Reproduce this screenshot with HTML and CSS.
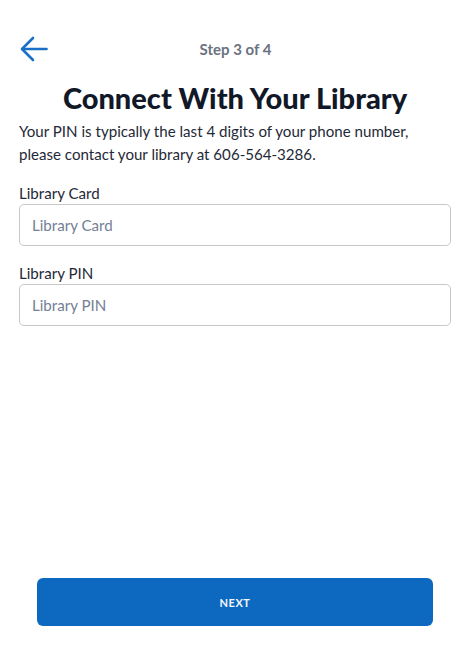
FILE: index.html
```html
<!DOCTYPE html>
<html lang="en">
<head>
<meta charset="utf-8">
<title>Connect With Your Library</title>
<link rel="stylesheet" href="styles.css">
</head>
<body>
<div class="page">
  <header class="topbar">
    <button class="back" aria-label="Back">
      <svg width="28" height="26" viewBox="0 0 28 26" fill="none" stroke="#1a6fc6" stroke-width="2.6" stroke-linecap="round" stroke-linejoin="round">
        <path d="M26.5 13H2.5"/>
        <path d="M13 2L2 13l11 11"/>
      </svg>
    </button>
    <div class="step">Step 3 of 4</div>
    <div class="spacer"></div>
  </header>
  <h1 class="title">Connect With Your Library</h1>
  <p class="intro">Your PIN is typically the last 4 digits of your phone number, please contact your library at 606-564-3286.</p>
  <form class="form">
    <label class="field">
      <span class="label">Library Card</span>
      <input class="input" type="text" placeholder="Library Card">
    </label>
    <label class="field">
      <span class="label">Library PIN</span>
      <input class="input" type="password" placeholder="Library PIN">
    </label>
  </form>
  <div class="actions">
    <button class="next" type="button">NEXT</button>
  </div>
</div>
</body>
</html>
```
FILE: styles.css
```css
* { box-sizing: border-box; }
html, body { margin: 0; padding: 0; height: 100%; background: #fff; }
body { font-family: Lato, "Liberation Sans", sans-serif; color: #1f2937; }
.page {
  height: 655px;
  display: flex;
  flex-direction: column;
  padding: 36px 13px 29px 19px;
}
.topbar {
  display: flex;
  align-items: center;
  height: 26px;
}
.back {
  width: 30px;
  height: 26px;
  padding: 0 0 0 1px;
  border: 0;
  background: none;
  display: flex;
  align-items: center;
}
.step {
  flex: 1;
  text-align: center;
  font-size: 15px;
  font-weight: 700;
  color: #6b7280;
  padding-left: 1px;
}
.spacer { width: 30px; }
.title {
  margin: 18px 0 0;
  text-align: center;
  font-size: 29px;
  line-height: 36px;
  font-weight: 900;
  color: #111827;
}
.intro {
  margin: 4px 0 0;
  font-size: 15.1px;
  line-height: 23px;
  color: #1f2937;
}
.form {
  display: flex;
  flex-direction: column;
  gap: 16px;
  margin-top: 16px;
}
.field { display: flex; flex-direction: column; }
.label {
  font-size: 15.1px;
  line-height: 22px;
  color: #1f2937;
}
.input {
  height: 42px;
  width: 432px;
  border: 1px solid #c8c8c8;
  border-radius: 5px;
  padding: 0 12px;
  font-family: inherit;
  font-size: 15.1px;
  color: #1f2937;
  outline: none;
}
.input::placeholder { color: #748094; }
.actions {
  margin-top: auto;
  display: flex;
  justify-content: center;
}
.next {
  width: 396px;
  height: 48px;
  border: 0;
  border-radius: 6px;
  background: #0d69c0;
  color: #f3f6fa;
  font-family: inherit;
  font-size: 11px;
  font-weight: 700;
  letter-spacing: 0.5px;
}
```
